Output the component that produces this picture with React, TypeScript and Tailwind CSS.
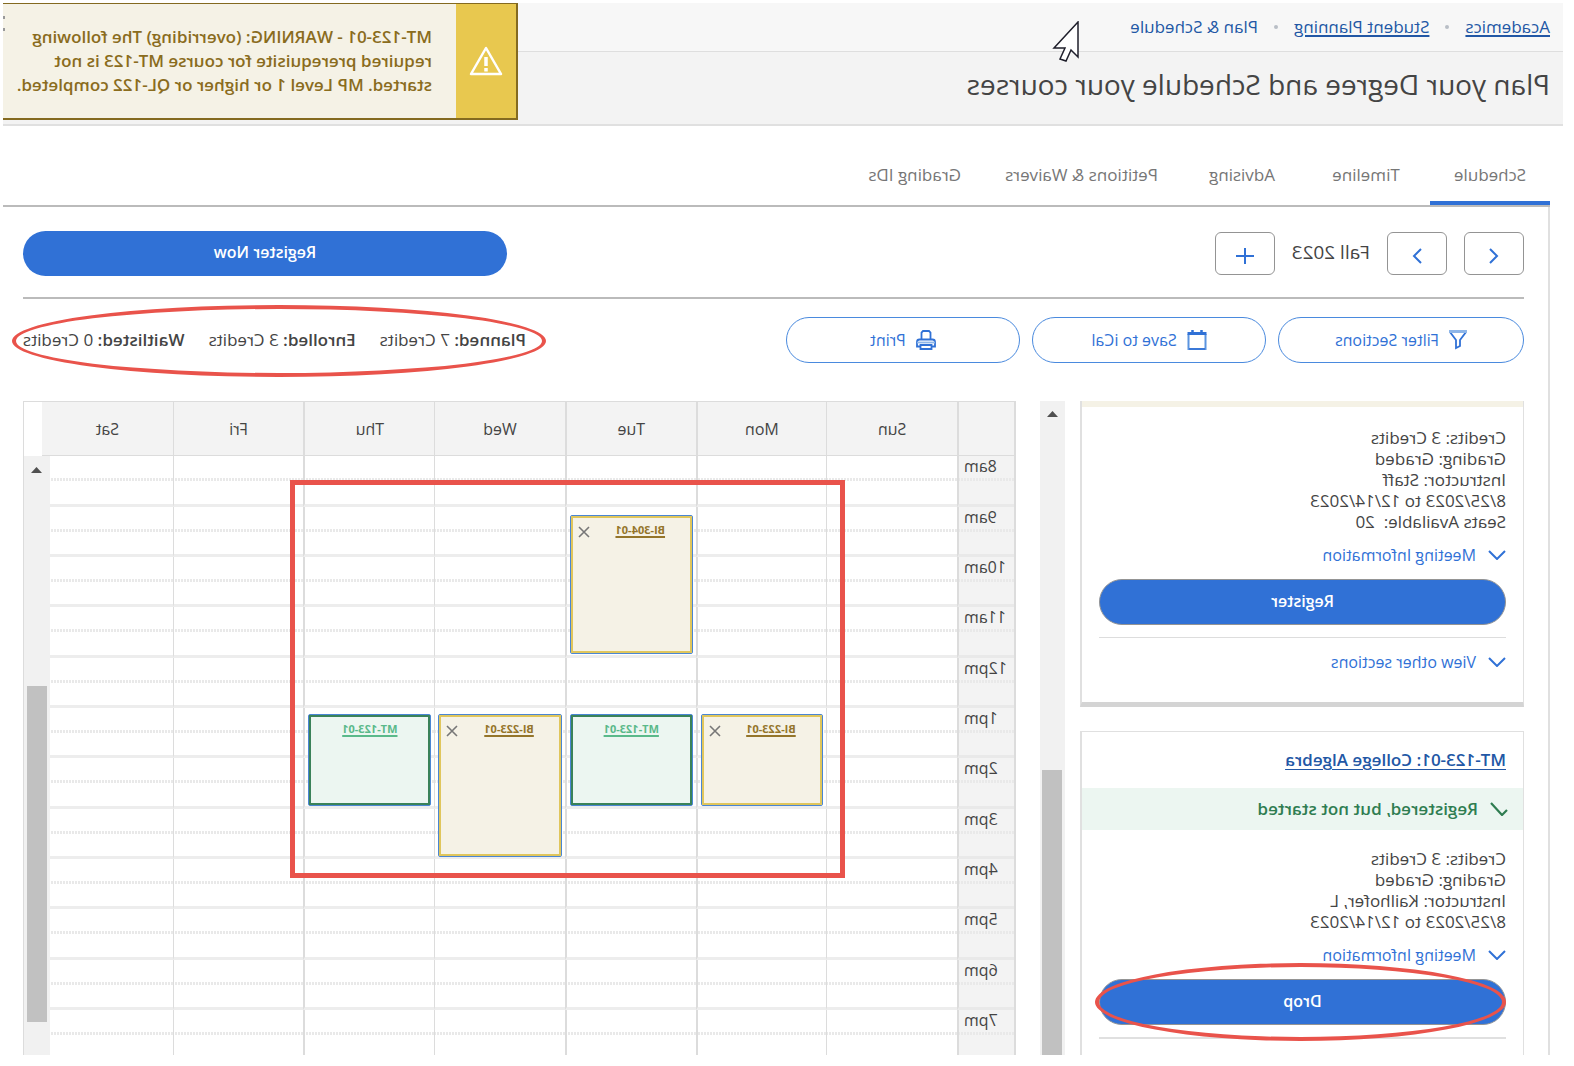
import { clsx } from 'clsx'

const crumbs = [
  { label: 'Academics', href: '#academics' },
  { label: 'Student Planning', href: '#planning' },
]

const tabs = ['Schedule', 'Timeline', 'Advising', 'Petitions & Waivers', 'Grading IDs']

const credits = [
  { label: 'Planned:', value: '7 Credits' },
  { label: 'Enrolled:', value: '3 Credits' },
  { label: 'Waitlisted:', value: '0 Credits' },
]

const days = [
  { name: 'Sun', border: 'border-r' },
  { name: 'Mon', border: 'border-r-2' },
  { name: 'Tue', border: 'border-r-2' },
  { name: 'Wed', border: 'border-r' },
  { name: 'Thu', border: 'border-r-2' },
  { name: 'Fri', border: 'border-r' },
  { name: 'Sat', border: '' },
]

const hours = ['8am', '9am', '10am', '11am', '12pm', '1pm', '2pm', '3pm', '4pm', '5pm', '6pm', '7pm']

type Meeting = { day: string; hour: string; course: string; planned: boolean; size: string }

const meetings: Meeting[] = [
  { day: 'Tue', hour: '9am', course: 'BI-304-01', planned: true, size: 'top-2 h-[139px]' },
  { day: 'Mon', hour: '1pm', course: 'BI-223-01', planned: true, size: 'top-1.5 h-[92px]' },
  { day: 'Tue', hour: '1pm', course: 'MT-123-01', planned: false, size: 'top-1.5 h-[92px]' },
  { day: 'Wed', hour: '1pm', course: 'BI-223-01', planned: true, size: 'top-1.5 h-[143px]' },
  { day: 'Thu', hour: '1pm', course: 'MT-123-01', planned: false, size: 'top-1.5 h-[92px]' },
]

function FilterIcon() {
  return (
    <svg viewBox="0 0 18 20" className="h-5 w-[18px]" fill="none" stroke="currentColor" strokeWidth="1.8">
      <path d="M1 2h16l-6 8v8l-4-2v-6z" />
      <path d="M0 1.500h18" stroke="#8db5e8" strokeWidth="3" />
    </svg>
  )
}

function CalendarIcon() {
  return (
    <svg viewBox="0 0 20 20" className="size-5" fill="none" stroke="currentColor">
      <path d="M1.500 4v15h17V4" stroke="#5b94df" strokeWidth="2" />
      <path d="M2 19h16" strokeWidth="1.500" />
      <path d="M0.500 3.500h19" strokeWidth="3" />
      <path d="M5.500 0v3M14.500 0v3" strokeWidth="2.500" />
    </svg>
  )
}

function PrintIcon() {
  return (
    <svg viewBox="0 0 20 20" className="size-5" fill="none" stroke="currentColor" strokeWidth="1.800">
      <path d="M5.500 9V2.500L7 1h6l1.500 1.500V9" />
      <path d="M4 16.500H1V12q0-2.500 2.500-2.500h13q2.500 0 2.500 2.500v4.500h-3" />
      <path d="M1 12.500h18" stroke="#8db5e8" />
      <path d="M4.500 15h11v4h-11z" />
    </svg>
  )
}

function ScrollArrow() {
  return (
    <svg viewBox="0 0 11 6" className="h-1.5 w-[11px]" fill="#505050">
      <path d="M5.500 0L11 6H0z" />
    </svg>
  )
}

function RedEllipse({ className }: { className: string }) {
  return (
    <div className={clsx('pointer-events-none absolute rounded-[50%] border-4 border-[#e9534b]', className)} />
  )
}

function Header() {
  return (
    <header className="relative">
      <nav className="flex h-[49px] items-center border-b border-[#dedede] bg-[#f7f7f7] px-[13px] text-[17px] text-[#2257a5]">
        {crumbs.map((c) => (
          <span key={c.label} className="flex items-center">
            <a href={c.href} className="underline decoration-2 underline-offset-2">{c.label}</a>
            <span className="mx-4 size-1 rounded-full bg-[#b9bec6]" />
          </span>
        ))}
        <span>Plan &amp; Schedule</span>
      </nav>
      <div className="flex h-[74px] items-center border-b-2 border-[#e0e0e0] bg-[#f3f3f3] px-[13px] pb-2">
        <h1 className="text-[28px] text-[#444]">Plan your Degree and Schedule your courses</h1>
      </div>

      {/* pointer */}
      <svg viewBox="0 0 27 41" className="absolute left-[484px] top-[18px] h-[41px] w-[27px]" fill="#fff" stroke="#1f1f2b" strokeWidth="1.500">
        <path d="M1 1v35l7-7 5 11 6-2-5-11h11z" />
      </svg>

      <div role="alert" className="absolute right-0 top-0 flex h-[117px] w-[515px] border-b-2 border-l-2 border-t border-[#846a20] bg-[#f5f2e6]">
        <div className="flex w-[60px] shrink-0 items-center justify-center bg-[#e8c84f]">
          <svg viewBox="0 0 34 30" className="h-[30px] w-[34px]" fill="none" stroke="#fff" strokeWidth="2.500" strokeLinejoin="round">
            <path d="M17 2L32 28H2z" />
            <path d="M17 11v9M17 22v3.500" strokeWidth="3.500" />
          </svg>
        </div>
        <p className="self-center whitespace-nowrap pl-6 text-[17px] font-semibold leading-6 text-[#8a6c1d]">
          MT-123-01 - WARNING: (overriding) The following<br />
          required prerequisite for course MT-123 is not<br />
          started. MP Level 1 or higher or QL-122 completed.
        </p>
        <span className="absolute right-0 top-3 h-[3px] w-0.5 bg-[#999]" />
        <span className="absolute right-0 top-6 h-[3px] w-0.5 bg-[#999]" />
      </div>
    </header>
  )
}

function Tabs() {
  return (
    <div role="tablist" className="flex h-[81px] shrink-0 items-end gap-1 border-b-2 border-[#bbb]">
      {tabs.map((tab, i) => (
        <button
          key={tab}
          role="tab"
          aria-selected={i === 0}
          className={clsx(
            'h-14 min-w-[120px] border-b-4 px-5 text-[17px] text-[#767676]',
            i === 0 ? 'border-[#3071d6]' : 'border-transparent',
          )}
        >
          {tab}
        </button>
      ))}
    </div>
  )
}

const squareButton =
  'flex h-[43px] w-[60px] items-center justify-center rounded-md border border-[#949494] bg-white pt-1 text-[#3071d6]'
const outlineButton =
  'flex h-[46px] items-center justify-center gap-2.5 rounded-full border border-[#4a8ade] text-base text-[#3071d6]'

function TermBar() {
  return (
    <div className="flex items-center justify-between border-b-2 border-[#bbb] pb-[21px] pt-6">
      <div className="flex items-center gap-[17px]">
        <button aria-label="Previous term" className={squareButton}>
          <svg viewBox="0 0 10 16" className="h-4 w-2.5" fill="none" stroke="currentColor" strokeWidth="2">
            <path d="M9 1L2 8l7 7" />
          </svg>
        </button>
        <button aria-label="Next term" className={squareButton}>
          <svg viewBox="0 0 10 16" className="h-4 w-2.5" fill="none" stroke="currentColor" strokeWidth="2">
            <path d="M1 1l7 7-7 7" />
          </svg>
        </button>
        <span className="pb-1 text-[19px] leading-7 text-[#444]">Fall 2023</span>
        <button aria-label="Add a term" className={squareButton}>
          <svg viewBox="0 0 18 18" className="size-[18px]" fill="none" stroke="currentColor" strokeWidth="2">
            <path d="M9 1v16M0 9h18" />
          </svg>
        </button>
      </div>
      <button className="h-[45px] w-[484px] rounded-full bg-[#3071d6] pb-1 text-base font-semibold text-white">
        Register Now
      </button>
    </div>
  )
}

function ActionBar() {
  return (
    <div className="relative flex items-center justify-between pt-[18px]">
      <div className="flex gap-3">
        <button className={clsx(outlineButton, 'w-[246px]')}>
          <FilterIcon /> Filter Sections
        </button>
        <button className={clsx(outlineButton, 'w-[234px]')}>
          <CalendarIcon /> Save to iCal
        </button>
        <button className={clsx(outlineButton, 'w-[234px]')}>
          <PrintIcon /> Print
        </button>
      </div>
      <div className="flex gap-6 text-[17px] text-[#444]">
        {credits.map((c) => (
          <span key={c.label} className="whitespace-nowrap"><b className="font-semibold">{c.label}</b> {c.value}</span>
        ))}
      </div>
      <RedEllipse className="-right-[11px] top-1.5 h-[72px] w-[534px]" />
    </div>
  )
}

function Disclosure({ label }: { label: string }) {
  return (
    <button className="flex h-6 items-center gap-3 text-base text-[#3071d6]">
      <svg viewBox="0 0 18 10" className="h-2.5 w-[18px] shrink-0" fill="none" stroke="currentColor" strokeWidth="2">
        <path d="M1 1l8 8 8-8" />
      </svg>
      {label}
    </button>
  )
}

function CourseDetails({ lines, action }: { lines: string[]; action: string }) {
  return (
    <>
      {lines.map((line) => (
        <p key={line} className="whitespace-pre text-[17px] leading-[21px] text-[#444]">{line}</p>
      ))}
      <div className="pb-3 pt-[11px]">
        <Disclosure label="Meeting Information" />
      </div>
      <button className="block h-[46px] w-full rounded-full border border-[#949494] bg-[#3071d6] pb-0.5 text-base font-semibold text-white">
        {action}
      </button>
    </>
  )
}

function CourseList() {
  return (
    <aside className="flex w-[484px] shrink-0 justify-between overflow-hidden">
      <div className="flex w-[444px] flex-col gap-6">
        <section className="border-b-[5px] border-l border-r-2 border-b-[#d4d4d4] border-x-[#e0e0e0]">
          <div className="h-1.5 bg-[#f5f2e6]" />
          <div className="px-[17px] pb-7 pt-5">
            <CourseDetails
              lines={['Credits: 3 Credits', 'Grading: Graded', 'Instructor: Staff', '8/25/2023 to 12/14/2023', 'Seats Available:  20']}
              action="Register"
            />
            <div className="mt-3 border-t border-[#ddd] pt-3">
              <Disclosure label="View other sections" />
            </div>
          </div>
        </section>

        <section className="border-l border-r-2 border-t border-[#e0e0e0]">
          <h2 className="px-[17px] pb-4 pt-[15px] text-[17px] font-semibold leading-[25px] text-[#2257a5]">
            <a href="#mt-123" className="underline underline-offset-3">MT-123-01: College Algebra</a>
          </h2>
          <div className="flex h-[42px] items-center gap-3 bg-[#ecf6f1] pl-[15px] text-[17px] font-semibold text-[#2f7d51]">
            <svg viewBox="0 0 18 14" className="h-3.5 w-[18px]" fill="none" stroke="currentColor" strokeWidth="2.200">
              <path d="M1 8l5 5L17 1" />
            </svg>
            Registered, but not started
          </div>
          <div className="relative px-[17px] pt-[18px]">
            <CourseDetails
              lines={['Credits: 3 Credits', 'Grading: Graded', 'Instructor: Kailhofer, L', '8/25/2023 to 12/14/2023']}
              action="Drop"
            />
            <div className="mt-3 border-t-2 border-[#e0e0e0] pt-6" />
            <RedEllipse className="bottom-[22px] left-[17px] right-[13px] h-[78px]" />
          </div>
        </section>
      </div>
      <div className="flex w-[25px] flex-col items-center bg-[#f1f1f1] pt-2.5">
        <ScrollArrow />
        <div className="mt-[353px] w-5 flex-1 bg-[#c1c1c1]" />
      </div>
    </aside>
  )
}

function MeetingBlock({ course, planned, size }: Meeting) {
  return (
    <div className={clsx('absolute inset-x-[3px] z-10 rounded-xs border border-[#4a86d4]', size)}>
      <div
        className={clsx(
          'flex h-full items-start border-2 px-[5px] pt-1.5',
          planned ? 'border-[#e0c65c] bg-[#f5f2e6]' : 'border-[#3a8259] bg-[#ecf6f1]',
        )}
      >
        <a
          href={`#${course}`}
          className={clsx(
            'flex-1 text-center text-[11px] font-bold leading-3 underline decoration-2 underline-offset-2',
            planned ? 'text-[#94752a]' : 'text-[#5ab98a]',
          )}
        >
          {course}
        </a>
        {planned && (
          <button aria-label={`Remove ${course}`} className="ml-1.5 mt-0.5 text-[#777]">
            <svg viewBox="0 0 12 12" className="size-3" fill="none" stroke="currentColor" strokeWidth="1.600">
              <path d="M1 1l10 10M11 1L1 11" />
            </svg>
          </button>
        )}
      </div>
    </div>
  )
}

function Calendar() {
  return (
    <div className="relative flex-1 overflow-hidden border-l-2 border-r border-t border-[#dcdcdc] pr-[18px]">
      <table className="w-full table-fixed border-separate border-spacing-0 text-base text-[#444]">
        <colgroup>
          <col className="w-[57px]" />
        </colgroup>
        <thead>
          <tr className="h-[54px]">
            <th className="border-b border-r-2 border-[#dcdcdc] bg-[#f3f3f3]" />
            {days.map((d) => (
              <th key={d.name} className={clsx('border-b border-[#dcdcdc] bg-[#f3f3f3] pt-0 font-normal', d.border)}>
                {d.name}
              </th>
            ))}
          </tr>
        </thead>
        <tbody>
          {hours.map((hour) => (
            <tr key={hour} className="h-[50px] nth-[3n+1]:h-[51px]">
              <th className="border-b-[3px] border-r-2 border-b-[#e9e9e9] border-r-[#dcdcdc] bg-[#f3f3f3] p-0 align-top font-normal">
                <div className="h-[22px] pr-[5px] text-right leading-5">{hour}</div>
                <div className="h-[3px] bg-[repeating-linear-gradient(90deg,#e9e9e9_0_2px,transparent_2px_3px)]" />
              </th>
              {days.map((d) => (
                <td key={d.name} className={clsx('relative border-b-[3px] border-b-[#ededed] border-r-[#dcdcdc] p-0 align-top', d.border)}>
                  <div className="mt-[22px] h-[3px] bg-[repeating-linear-gradient(90deg,#e9e9e9_0_2px,transparent_2px_3px)]" />
                  {meetings
                    .filter((m) => m.day === d.name && m.hour === hour)
                    .map((m) => <MeetingBlock key={m.course} {...m} />)}
                </td>
              ))}
            </tr>
          ))}
        </tbody>
      </table>

      {/* body scrollbar */}
      <div className="absolute bottom-0 right-0 top-[54px] flex w-[26px] flex-col items-center bg-[#f1f1f1] pb-[33px] pt-[11px]">
        <ScrollArrow />
        <div className="mt-[213px] w-5 flex-1 bg-[#c1c1c1]" />
      </div>

      <div className="pointer-events-none absolute left-[169px] right-[266px] top-[78px] z-20 h-[398px] border-5 border-[#e9534b]" />
    </div>
  )
}

export default function App() {
  return (
    <div className="h-screen -scale-x-100 bg-white pb-[11px] pl-[11px] pr-[3px] pt-[3px] font-['Open_Sans','Liberation_Sans',sans-serif]">
      <div className="flex h-full flex-col overflow-hidden">
        <Header />
        <main className="flex min-h-0 flex-1 flex-col pl-[13px]">
          <Tabs />
          <div className="flex min-h-0 flex-1 flex-col border-l-2 border-[#e0e0e0] pl-6 pr-5">
            <TermBar />
            <ActionBar />
            <div className="mt-[38px] flex min-h-0 flex-1 gap-6">
              <CourseList />
              <Calendar />
            </div>
          </div>
        </main>
      </div>
    </div>
  )
}
